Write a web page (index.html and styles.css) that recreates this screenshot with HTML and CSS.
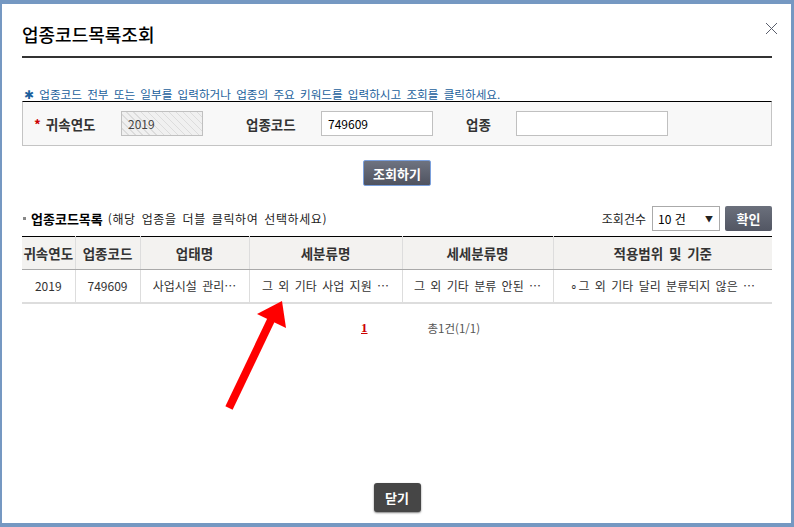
FILE: index.html
```html
<!DOCTYPE html>
<html lang="ko">
  <head>
    <meta charset="UTF-8" />
    <meta name="viewport" content="width=device-width, initial-scale=1.0" />
    <title>업종코드목록조회</title>
    <link rel="stylesheet" href="styles.css">
  </head>
  <body>
    <div class="dialog">
      <div class="dlg-head">
        <h1>업종코드목록조회</h1>
        <button class="btn-x" type="button" aria-label="닫기">
          <svg width="13" height="13" viewBox="0 0 13 13">
            <path d="M1 1 L12 12 M12 1 L1 12" stroke="#5a5f6c" stroke-width="1" fill="none" />
          </svg>
        </button>
      </div>

      <p class="guide">✱ 업종코드 전부 또는 일부를 입력하거나 업종의 주요 키워드를 입력하시고 조회를 클릭하세요.</p>

      <div class="search-box">
        <label class="lbl lbl-year"><span class="req">*</span>귀속연도</label>
        <input class="field field-year" type="text" value="2019" disabled>
        <label class="lbl lbl-code">업종코드</label>
        <input class="field field-code" type="text" value="749609">
        <label class="lbl lbl-name">업종</label>
        <input class="field field-name" type="text" value="">
      </div>

      <div class="search-row">
        <button class="btn-search" type="button">조회하기</button>
      </div>

      <div class="list-head">
        <h2><span class="dot"></span>업종코드목록 <span class="hint">(해당 업종을 더블 클릭하여 선택하세요)</span></h2>
        <div class="count">
          <span>조회건수</span>
          <div class="select"><span>10 건</span><span class="caret">▼</span></div>
          <button class="btn-ok" type="button">확인</button>
        </div>
      </div>

      <table class="grid">
        <colgroup>
          <col style="width:53px">
          <col style="width:65px">
          <col style="width:109px">
          <col style="width:153px">
          <col style="width:151px">
          <col>
        </colgroup>
        <thead>
          <tr>
            <th>귀속연도</th>
            <th>업종코드</th>
            <th>업태명</th>
            <th>세분류명</th>
            <th>세세분류명</th>
            <th>적용범위 및 기준</th>
          </tr>
        </thead>
        <tbody>
          <tr>
            <td>2019</td>
            <td>749609</td>
            <td>사업시설 관리…</td>
            <td>그 외 기타 사업 지원 …</td>
            <td>그 외 기타 분류 안된 …</td>
            <td>∘그 외 기타 달리 분류되지 않은 …</td>
          </tr>
        </tbody>
      </table>

      <div class="paging">
        <a href="#" class="page-on">1</a>
        <span class="total">총1건(1/1)</span>
      </div>

      <div class="dlg-foot">
        <button class="btn-close" type="button">닫기</button>
      </div>
    </div>

    <svg class="mark" width="794" height="527" viewBox="0 0 794 527">
      <line x1="229" y1="408" x2="271" y2="320" stroke="#ff0000" stroke-width="8" />
      <polygon points="282,301 257,314 286,328" fill="#ff0000" />
    </svg>
  </body>
</html>
```

FILE: styles.css
```css
* {
  box-sizing: border-box;
}
html,
body {
  margin: 0;
  height: 100%;
}
body {
  font-family: "Noto Sans CJK KR", "Noto Sans", sans-serif;
  font-size: 12px;
  word-spacing: 2px;
  color: #333;
  background: #7598c2;
  overflow: hidden;
}
.dialog {
  height: 527px;
  background: #fff;
  border-style: solid;
  border-color: #7598c2;
  border-width: 4px 3px 4px 2px;
  padding: 0 19px 0 20px;
  display: flex;
  flex-direction: column;
}
.dlg-head {
  display: flex;
  justify-content: space-between;
  align-items: flex-start;
  padding-top: 18px;
  padding-bottom: 10px;
  border-bottom: 2px solid #333;
}
.dlg-head h1 {
  margin: 0;
  font-size: 18px;
  line-height: 24px;
  font-weight: 500;
  color: #000;
}
.btn-x {
  border: none;
  background: none;
  padding: 0;
  margin: 0 -6px 0 0;
  width: 13px;
  height: 13px;
  line-height: 0;
}
.guide {
  margin: 29px 0 0;
  padding-left: 2px;
  font-size: 11.6px;
  line-height: 14px;
  color: #1b5f9c;
}
.search-box {
  display: flex;
  align-items: center;
  background: #f8f8f8;
  border: 1px solid #c4c4c4;
  border-top: 1px solid #000;
  padding: 9px 0 9px;
}
.lbl {
  font-size: 13.5px;
  font-weight: bold;
  color: #333;
}
.lbl-year {
  margin-left: 11px;
  width: 87px;
}
.req {
  color: #c00;
  margin-right: 5px;
}
.lbl-code {
  margin-left: 43px;
  width: 75px;
}
.lbl-name {
  margin-left: 33px;
  width: 50px;
}
.field {
  height: 25px;
  border: 1px solid #c0c0c0;
  background: #fff;
  font-family: inherit;
  font-size: 12px;
  color: #000;
  padding: 0 6px;
}
.field-year {
  width: 82px;
  color: #444;
  background: repeating-linear-gradient(45deg, #f0f0f0 0, #f0f0f0 4px, #dcdcdc 4px, #dcdcdc 5px);
}
.field-code {
  width: 112px;
}
.field-name {
  width: 152px;
}
.search-row {
  display: flex;
  justify-content: center;
  margin-top: 14px;
}
.btn-search {
  height: 26px;
  padding: 0 9px;
  border: 1px solid #7ba0dc;
  border-radius: 2px;
  background: linear-gradient(#6e7380, #4f5360);
  color: #fff;
  font-family: inherit;
  font-size: 13px;
  font-weight: bold;
}
.list-head {
  display: flex;
  justify-content: space-between;
  align-items: center;
  margin-top: 20px;
  height: 25px;
  margin-bottom: 5px;
}
.list-head h2 {
  margin: 0;
  font-size: 13px;
  font-weight: bold;
  color: #000;
  display: flex;
  align-items: center;
}
.dot {
  width: 3px;
  height: 3px;
  background: #888;
  margin: 0 5px 0 1px;
}
.hint {
  font-size: 12px;
  font-weight: normal;
  letter-spacing: 0.6px;
  color: #222;
  margin-left: 5px;
}
.count {
  display: flex;
  align-items: center;
  color: #222;
}
.select {
  display: flex;
  justify-content: space-between;
  align-items: center;
  width: 68px;
  height: 25px;
  margin-left: 6px;
  padding: 0 6px 0 5px;
  border: 1px solid #aaa;
  background: #fff;
  color: #000;
  word-spacing: 0;
}
.caret {
  font-size: 8px;
  color: #222;
}
.btn-ok {
  margin-left: 5px;
  width: 47px;
  height: 25px;
  border: none;
  border-radius: 2px;
  background: linear-gradient(#6b707c, #525663);
  color: #fff;
  font-family: inherit;
  font-size: 13px;
  font-weight: bold;
}
.grid {
  width: 100%;
  border-collapse: collapse;
  table-layout: fixed;
  border-top: 1px solid #000;
}
.grid th,
.grid td {
  text-align: center;
  white-space: nowrap;
  overflow: hidden;
  border-left: 1px solid #ddd;
}
.grid th:first-child,
.grid td:first-child {
  border-left: none;
}
.grid th {
  height: 33px;
  background: #f3f2f0;
  font-size: 13.5px;
  font-weight: bold;
  color: #333;
  border-bottom: 1px solid #a9a9a9;
}
.grid td {
  height: 33px;
  font-size: 12px;
  color: #333;
  border-bottom: 2px solid #ddd;
}
.paging {
  display: flex;
  align-items: center;
  margin-top: 16px;
  padding-left: 339px;
}
.page-on {
  font-family: "Liberation Serif", serif;
  font-size: 13px;
  font-weight: bold;
  color: #c00;
}
.total {
  margin-left: 60px;
  font-size: 11.5px;
  color: #555;
}
.dlg-foot {
  margin-top: auto;
  margin-bottom: 11px;
  display: flex;
  justify-content: center;
}
.btn-close {
  width: 47px;
  height: 29px;
  border: none;
  border-radius: 3px;
  background: #464646;
  box-shadow: 0 1px 2px rgba(0, 0, 0, 0.5);
  color: #fff;
  font-family: inherit;
  font-size: 13px;
  font-weight: bold;
}
.mark {
  position: absolute;
  left: 0;
  top: 0;
  pointer-events: none;
}
```
